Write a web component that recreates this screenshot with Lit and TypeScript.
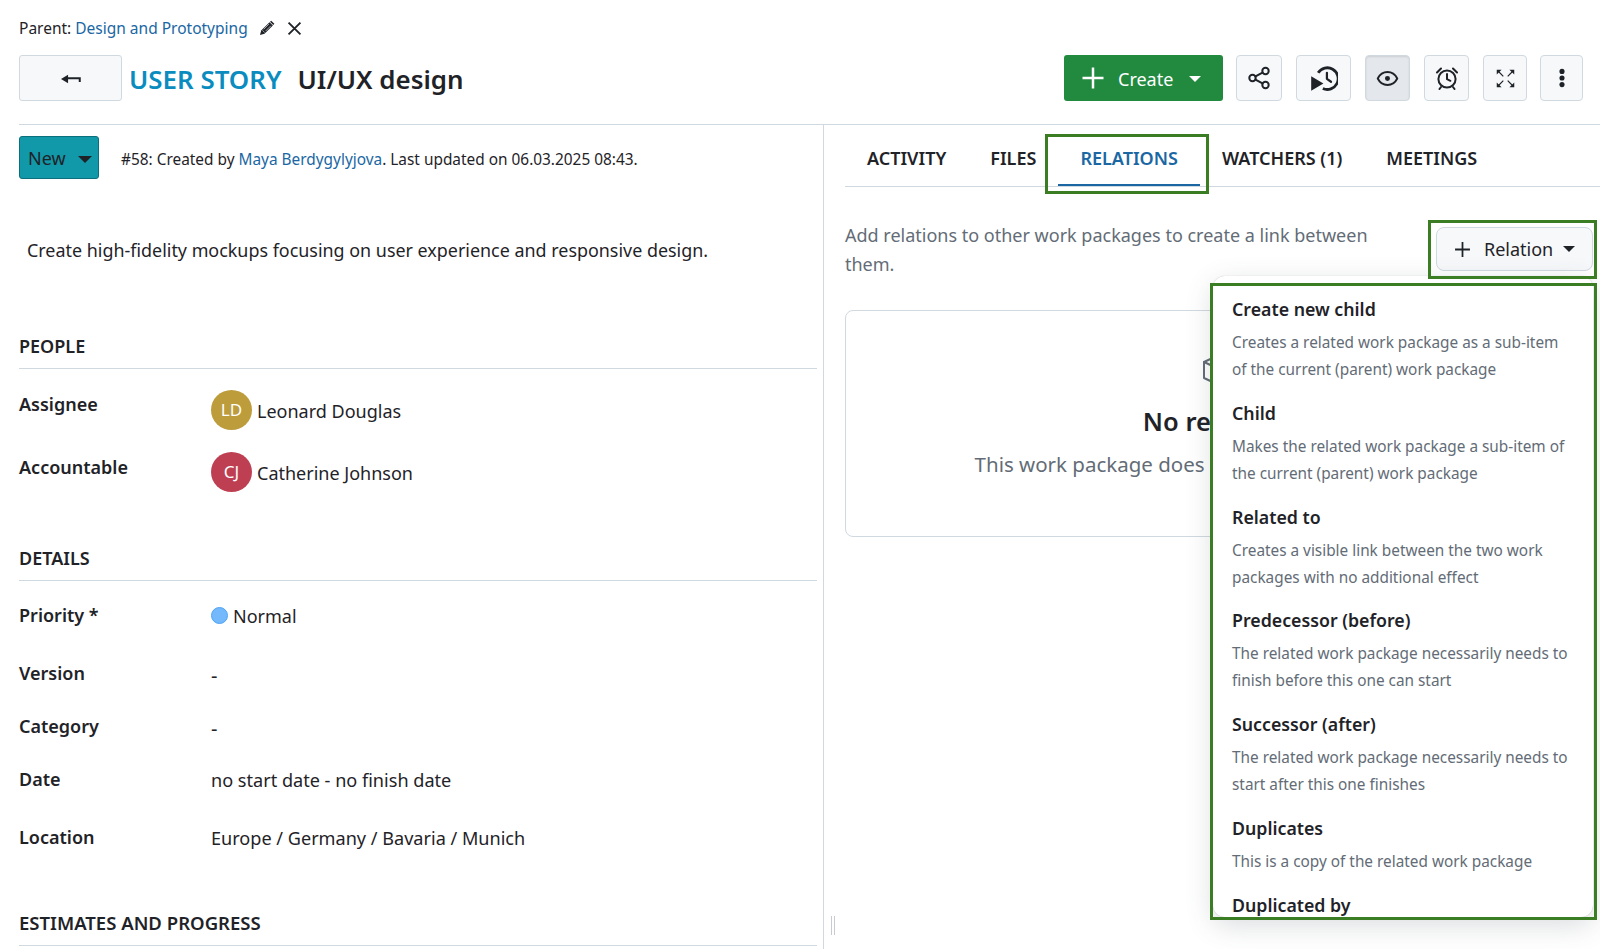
import { LitElement, html, css, svg } from "lit";
import { customElement } from "lit/decorators.js";

const items = [
  ["Create new child", "Creates a related work package as a sub-item of the current (parent) work package"],
  ["Child", "Makes the related work package a sub-item of the current (parent) work package"],
  ["Related to", "Creates a visible link between the two work packages with no additional effect"],
  ["Predecessor (before)", "The related work package necessarily needs to finish before this one can start"],
  ["Successor (after)", "The related work package necessarily needs to start after this one finishes"],
  ["Duplicates", "This is a copy of the related work package"],
  ["Duplicated by", ""],
];

const icon = (size: number, body: unknown, vb = 24) => html`<svg class="ic" width=${size} height=${size} viewBox="0 0 ${vb} ${vb}" fill="none" stroke="currentColor" stroke-width="2" stroke-linecap="round" stroke-linejoin="round">${body}</svg>`;

const icons = {
  share: svg`<circle cx="18.5" cy="5" r="3.2"/><circle cx="5.5" cy="12" r="3.2"/><circle cx="18.5" cy="19" r="3.2"/><path d="M8.5 10.4l7-3.8M8.5 13.6l7 3.8"/>`,
  history: svg`<path d="M7 7.5A9.3 9.3 0 1 1 11 21" stroke-width="2.4" stroke-linecap="butt"/><path d="M14.5 7.5v5.2l3.5 2.5" stroke-width="1.9"/><path d="M1 10.5l10.5 6.3L1 23z" fill="currentColor" stroke="none"/>`,
  eye: svg`<path d="M1.8 12C4 7.6 7.6 5.2 12 5.2s8 2.4 10.2 6.8c-2.2 4.4-5.8 6.8-10.2 6.8S4 16.4 1.8 12z"/><circle cx="12" cy="12" r="2.6" fill="currentColor" stroke="none"/>`,
  alarm: svg`<circle cx="12" cy="13" r="8.6"/><path d="M12 8v5.2l3.4 1.6"/><path d="M2 6.5L6 2.5M22 6.5l-4-4M6 21l-1.5 2M18 21l1.5 2"/>`,
  full: svg`<g stroke-width="1.3" stroke-linecap="butt"><path d="M2 2h5.5L2 7.5z" fill="currentColor" stroke="none"/><path d="M4 4l5.5 5.5"/><path d="M22 2h-5.5L22 7.5z" fill="currentColor" stroke="none"/><path d="M20 4l-5.5 5.5"/><path d="M2 22h5.5L2 16.5z" fill="currentColor" stroke="none"/><path d="M4 20l5.5-5.5"/><path d="M22 22h-5.5l5.5-5.5z" fill="currentColor" stroke="none"/><path d="M20 20l-5.5-5.5"/></g>`,
  more: svg`<g fill="currentColor" stroke="none"><circle cx="12" cy="4.8" r="2.8"/><circle cx="12" cy="12" r="2.8"/><circle cx="12" cy="19.2" r="2.8"/></g>`,
  plus: svg`<path d="M12 1.5v21M1.5 12h21" stroke-width="2.5" stroke-linecap="butt"/>`,
  pencil: svg`<path d="M1.5 22.5l1.8-6.8L15.8 3.2l5 5L8.3 20.7z" fill="currentColor" stroke="none"/><path d="M17.4 1.8l4.8 4.8" stroke-width="2.4" stroke-linecap="butt"/><path d="M5.5 15.8l2.7 2.7M7.5 13.5l7-7M10.3 16.2l7-7" stroke="#fff" stroke-width=".9"/>`,
  close: svg`<path d="M2.5 2.5l19 19M21.5 2.5l-19 19" stroke-width="3" stroke-linecap="butt"/>`,
  back: svg`<path d="M0 12l8.5-5.2v10.4z" fill="currentColor" stroke="none"/><path d="M7 11h15.5v4.5" stroke-width="2.4" stroke-linecap="butt" stroke-linejoin="miter"/>`,
  box: svg`<path d="M17 2l15 7v16l-15 7-15-7V9z"/><path d="M2 9l15 7 15-7M17 16v16"/>`,
};

@customElement("app-root")
export class AppRoot extends LitElement {
  static styles = css`
    :host { display: block; width: 1600px; height: 949px; overflow: hidden; position: relative; background: #fff; color: #1f2328; font-family: "Noto Sans", "Open Sans", sans-serif; font-size: 18px; line-height: 28px; }
    * { box-sizing: border-box; }
    a { color: #1a67a3; text-decoration: none; }
    .ic { display: block; flex: none; }
    .header { padding: 17px 17px 0 19px; }
    .parent { display: flex; align-items: center; height: 22px; font-size: 15.5px; line-height: 22px; }
    .parent a { margin-left: 4px; }
    .pencil { margin-left: 11px; }
    .close { margin-left: 12px; }
    .titlerow { display: flex; align-items: center; height: 46px; margin-top: 16px; }
    .backbtn { width: 103px; height: 46px; display: flex; align-items: center; justify-content: center; background: #f6f8fa; border: 1px solid #d1d9e0; border-radius: 3px; padding-top: 2px; }
    .type { font-size: 25.9px; font-weight: 600; color: #0b8cbf; margin-left: 7px; line-height: 36px; padding-top: 1px; }
    .subject { font-size: 25.9px; font-weight: 600; margin-left: 16px; line-height: 36px; padding-top: 1px; }
    .toolbar { margin-left: auto; display: flex; gap: 14px; }
    .create { width: 159px; height: 46px; margin-right: -1px; display: flex; align-items: center; background: #218a3f; color: #fff; border-radius: 3px; padding-left: 17px; font-size: 18px; }
    .create span { margin-left: 13px; padding-top: 2px; }
    .caret { width: 0; height: 0; border-left: 6px solid transparent; border-right: 6px solid transparent; border-top: 6px solid currentColor; flex: none; }
    .create .caret { margin-left: 16px; margin-top: 2px; }
    .tb { height: 46px; display: flex; align-items: center; justify-content: center; background: #f6f8fa; border: 1px solid #d1d9e0; border-radius: 4px; }
    .tb.on { background: #e4e7eb; box-shadow: inset 0 1px 2px rgba(31,35,40,.12); }
    .w46 { width: 46px; } .w55 { width: 55px; } .w45 { width: 45px; } .w44 { width: 44px; } .w43 { width: 43px; margin-left: -1px; }
    .rule { height: 1px; background: #d1d9e0; margin: 23px 0 0 19px; }
    .body { display: grid; grid-template-columns: 824px 1fr; height: 824px; }
    .left { border-right: 1px solid #d1d9e0; padding: 11px 6px 0 19px; }
    .status { display: flex; align-items: center; }
    .new { width: 80px; height: 43px; display: flex; align-items: center; background: #1198a9; border: 1px solid #0c6f7c; border-radius: 3px; padding-left: 8px; font-size: 18px; }
    .new .caret { margin-left: 12px; margin-top: 4px; border-left-width: 7px; border-right-width: 7px; border-top-width: 7px; }
    .meta { margin-left: 22px; font-size: 15.4px; line-height: 22px; padding-top: 5px; }
    .desc { margin: 57px 0 0 8px; font-size: 17.92px; }
    .section { margin-top: 68px; padding-bottom: 8px; border-bottom: 1px solid #d1d9e0; font-weight: 600; font-size: 18px; }
    .section.details { margin-top: 30px; padding-bottom: 8px; }
    .section.est { margin-top: 1px; padding-bottom: 8px; font-size: 18.55px; }
    .fields { margin-top: 21px; }
    .fields.d { margin-top: 20px; }
    .f { display: grid; grid-template-columns: 192px 1fr; align-items: start; }
    .f label { font-weight: 600; }
    .f label.dn { padding-top: 1px; }
    .h62 { height: 62px; }
    .h58 { height: 58px; } .h53 { height: 53px; } .h85 { height: 85px; }
    .person { display: flex; align-items: center; gap: 5px; height: 40px; }
    .person span { padding-top: 2px; }
    .avatar { width: 41px; height: 40px; border-radius: 50%; color: #fff; display: flex; align-items: center; justify-content: center; font-size: 17px; }
    .ld { background: #bd9c3c; } .cj { background: #be3f52; }
    .prio { display: flex; align-items: center; gap: 5px; }
    .prio span { padding-top: 1px; }
    .dot { width: 17px; height: 17px; border-radius: 50%; background: #74b9fb; border: 1px solid #4ea3f5; }
    .val { font-size: 18.1px; padding-top: 1px; }
    .dash { font-size: 20px; padding-top: 3px; }
    .right { padding-left: 21px; }
    .tabs { display: flex; height: 62px; border-bottom: 1px solid #d1d9e0; font-size: 18px; }
    .tab { padding: 6px 22px 0; height: 61px; display: flex; align-items: center; font-weight: 600; border-bottom: 2px solid transparent; white-space: nowrap; }
    .tab.active { color: #1a67a3; border-bottom-color: #1a67a3; }
    .intro { display: flex; justify-content: space-between; padding: 34px 7px 0 0; height: 123px; }
    .intro p { margin: 0; width: 540px; color: #636c76; font-size: 18px; line-height: 28.6px; }
    .relation { width: 157px; height: 44px; margin-top: 6px; display: flex; align-items: center; background: #f6f8fa; border: 1px solid #d1d9e0; border-radius: 8px; padding-left: 17px; font-size: 18px; }
    .relation span { margin-left: 13px; }
    .relation .caret { margin-left: 10px; border-left-width: 6px; border-right-width: 6px; border-top-width: 6px; }
    .card { margin: 0 7px 0 0; height: 227px; border: 1px solid #d1d9e0; border-radius: 8px; display: flex; flex-direction: column; align-items: center; padding-top: 42px; color: #636c76; }
    .card .no { margin-top: 17px; font-size: 25.5px; font-weight: 600; line-height: 34px; color: #1f2328; }
    .card .sub { margin-top: 12px; font-size: 20.5px; white-space: nowrap; }
    .menu { position: absolute; left: 1213px; top: 276px; width: 380px; height: 641px; background: #fff; border-radius: 12px; box-shadow: 0 0 1px rgba(31,35,40,.3), 0 8px 28px rgba(66,74,83,.2); overflow: hidden; padding: 19px 0 0 19px; }
    .item { padding-bottom: 15.8px; width: 340px; }
    .item b { display: block; font-weight: 600; font-size: 17.75px; }
    .item div { margin-top: 6px; font-size: 15.35px; line-height: 27px; color: #636c76; }
    .mark { position: absolute; border: 3px solid #3a7d22; pointer-events: none; }
    .m1 { left: 1045px; top: 134px; width: 164px; height: 60px; }
    .m2 { left: 1428px; top: 220px; width: 169px; height: 59px; }
    .m3 { left: 1210px; top: 283px; width: 387px; height: 637px; }
    .handle { position: absolute; left: 831px; top: 916px; width: 4px; height: 19px; border-left: 1px solid #c8ccd0; border-right: 1px solid #c8ccd0; }
  `;

  render() {
    return html`
      <div class="header">
        <div class="parent">Parent: <a href="#">Design and Prototyping</a>
          <span class="pencil">${icon(16, icons.pencil)}</span>
          <span class="close">${icon(15, icons.close)}</span>
        </div>
        <div class="titlerow">
          <div class="backbtn">${icon(20, icons.back)}</div>
          <span class="type">USER STORY</span>
          <span class="subject">UI/UX design</span>
          <div class="toolbar">
            <div class="create">${icon(24, icons.plus)}<span>Create</span><i class="caret"></i></div>
            <div class="tb w46">${icon(24, icons.share)}</div>
            <div class="tb w55">${icon(28, icons.history)}</div>
            <div class="tb w45 on">${icon(23, icons.eye)}</div>
            <div class="tb w45">${icon(24, icons.alarm)}</div>
            <div class="tb w44">${icon(21, icons.full)}</div>
            <div class="tb w43">${icon(22, icons.more)}</div>
          </div>
        </div>
      </div>
      <div class="rule"></div>
      <div class="body">
        <div class="left">
          <div class="status">
            <div class="new">New<i class="caret"></i></div>
            <div class="meta">#58: Created by <a href="#">Maya Berdygylyjova</a>. Last updated on 06.03.2025 08:43.</div>
          </div>
          <div class="desc">Create high-fidelity mockups focusing on user experience and responsive design.</div>
          <div class="section">PEOPLE</div>
          <div class="fields">
            <div class="f h62"><label>Assignee</label><div class="person"><div class="avatar ld">LD</div><span>Leonard Douglas</span></div></div>
            <div class="f h62"><label class="dn">Accountable</label><div class="person"><div class="avatar cj">CJ</div><span>Catherine Johnson</span></div></div>
          </div>
          <div class="section details">DETAILS</div>
          <div class="fields d">
            <div class="f h58"><label>Priority *</label><div class="prio"><i class="dot"></i><span>Normal</span></div></div>
            <div class="f h53"><label>Version</label><div class="dash">-</div></div>
            <div class="f h53"><label>Category</label><div class="dash">-</div></div>
            <div class="f h58"><label>Date</label><div class="val">no start date - no finish date</div></div>
            <div class="f h85"><label>Location</label><div class="val">Europe / Germany / Bavaria / Munich</div></div>
          </div>
          <div class="section est">ESTIMATES AND PROGRESS</div>
        </div>
        <div class="right">
          <div class="tabs">
            <div class="tab">ACTIVITY</div>
            <div class="tab">FILES</div>
            <div class="tab active">RELATIONS</div>
            <div class="tab">WATCHERS (1)</div>
            <div class="tab">MEETINGS</div>
          </div>
          <div class="intro">
            <p>Add relations to other work packages to create a link between them.</p>
            <div class="relation">${icon(17, icons.plus)}<span>Relation</span><i class="caret"></i></div>
          </div>
          <div class="card">
            ${icon(34, icons.box, 34)}
            <div class="no">No relations</div>
            <div class="sub">This work package does not have any relations yet.</div>
          </div>
        </div>
      </div>
      <div class="handle"></div>
      <div class="menu">
        ${items.map(([t, d]) => html`<div class="item"><b>${t}</b>${d ? html`<div>${d}</div>` : ""}</div>`)}
      </div>
      <div class="mark m1"></div>
      <div class="mark m2"></div>
      <div class="mark m3"></div>
    `;
  }
}
